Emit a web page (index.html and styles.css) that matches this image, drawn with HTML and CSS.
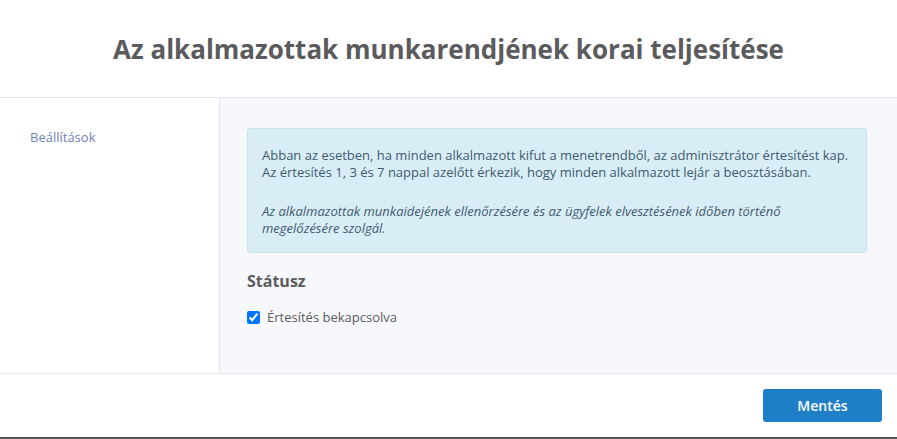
FILE: index.html
```html
<!DOCTYPE html>
<html>
<head>
   <meta charset="UTF-8">
   <title>Korai teljesítés</title>
   <link rel="stylesheet" href="styles.css">
</head>
<body>
   <div class="modal">
      <div class="modal-header">
         <h1>Az alkalmazottak munkarendjének korai teljesítése</h1>
      </div>
      <div class="modal-body">
         <div class="sidebar">
            <a href="#" class="sidebar-link">Beállítások</a>
         </div>
         <div class="content">
            <div class="info-box">
               <p>Abban az esetben, ha minden alkalmazott kifut a menetrendből, az adminisztrátor értesítést kap.<br>
               Az értesítés 1, 3 és 7 nappal azelőtt érkezik, hogy minden alkalmazott lejár a beosztásában.</p>
               <p class="note">Az alkalmazottak munkaidejének ellenőrzésére és az ügyfelek elvesztésének időben történő megelőzésére szolgál.</p>
            </div>
            <h2>Státusz</h2>
            <label class="check">
               <input type="checkbox" checked>
               Értesítés bekapcsolva
            </label>
         </div>
      </div>
      <div class="modal-footer">
         <button class="save-button">Mentés</button>
      </div>
   </div>
</body>
</html>
```

FILE: styles.css
```css
body {
   margin: 0;
   background-color: #fff;
   font-family: "Open Sans", Arial, sans-serif;
   color: #555;
}
.modal {
   height: 439px;
   display: flex;
   flex-direction: column;
   border-bottom: 2px solid #555;
   box-sizing: border-box;
}
.modal-header {
   height: 97px;
   display: flex;
   align-items: center;
   justify-content: center;
   border-bottom: 1px solid #e4e6ea;
}
h1 {
   margin: 0;
   font-size: 26px;
   font-weight: 700;
   color: #5b5b5e;
}
.modal-body {
   display: flex;
   height: 275px;
}
.sidebar {
   width: 220px;
   border-right: 1px solid #e4e6ea;
   padding: 27px 30px;
   box-sizing: border-box;
}
.sidebar-link {
   font-size: 13px;
   color: #6f82b8;
   text-decoration: none;
}
.content {
   flex: 1;
   background-color: #f7f8fc;
   padding: 30px 30px 0 27px;
}
.info-box {
   background-color: #d9edf7;
   border: 1px solid #c8e3ee;
   border-radius: 3px;
   padding: 18px 15px 15px 14px;
   font-size: 13px;
   line-height: 17px;
   color: #3e5b6d;
}
.info-box p {
   margin: 0;
}
.info-box .note {
   margin-top: 22px;
   font-style: italic;
}
h2 {
   margin: 17px 0 0;
   font-size: 16px;
   font-weight: 700;
   color: #5b5b5e;
   line-height: 22px;
}
.check {
   display: flex;
   align-items: center;
   margin-top: 16px;
   font-size: 13px;
   color: #5b5b5e;
}
.check input {
   margin: 0 7px 0 0;
   width: 13px;
   height: 13px;
}
.modal-footer {
   flex: 1;
   display: flex;
   justify-content: flex-end;
   align-items: center;
   border-top: 1px solid #e4e6ea;
   padding-right: 15px;
}
.save-button {
   width: 119px;
   height: 33px;
   background-color: #1f7fc6;
   color: #fff;
   border: none;
   border-radius: 3px;
   font-family: "Open Sans", Arial, sans-serif;
   font-size: 14px;
   font-weight: 600;
   cursor: pointer;
}
```
